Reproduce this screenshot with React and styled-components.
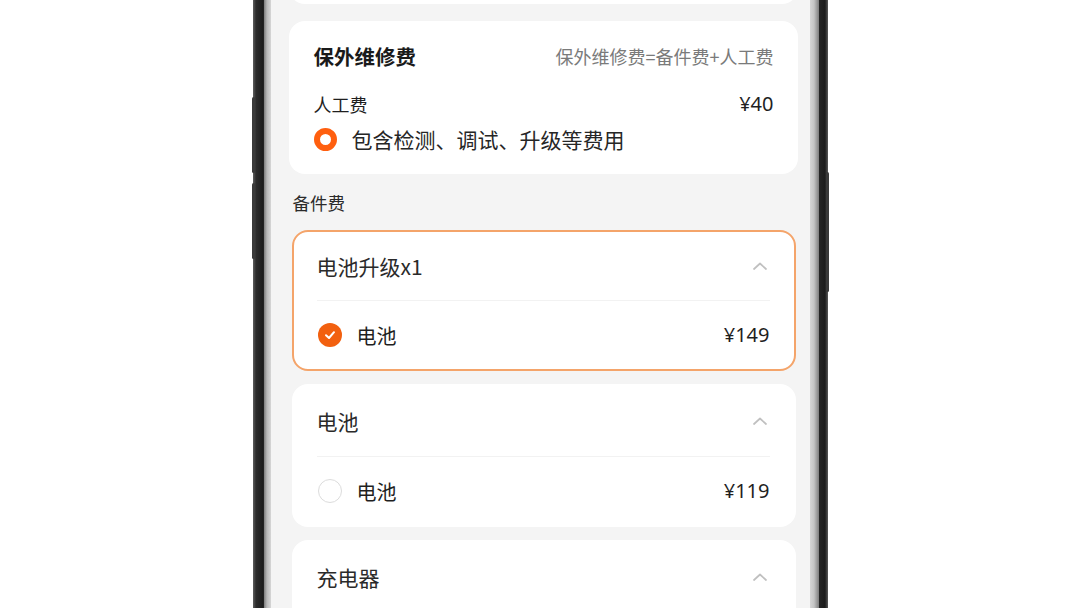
import React from "react";
import styled, { createGlobalStyle } from "styled-components";

const Global = createGlobalStyle`
  html, body { margin: 0; padding: 0; background: #ffffff; }
  body {
    width: 1080px; height: 608px; overflow: hidden;
    font-family: "Noto Sans CJK SC", "Noto Sans", sans-serif;
    color: #1f1f1f;
    -webkit-font-smoothing: antialiased;
  }
`;

const Phone = styled.div`
  position: relative;
  width: 575px;
  height: 820px;
  margin: -140px auto 0;
  padding: 0 18px;
  box-sizing: border-box;
  display: flex;
  border-radius: 60px;
  background: linear-gradient(
    90deg,
    #5e5e5e 0px, #2c2c2c 3px, #1c1c1c 10px, #2a2a2a 11px,
    #7c7c7c 11px, #b9b9b9 14px, #d6d6d6 18px,
    #d6d6d6 calc(100% - 18px), #c4c4c4 calc(100% - 14px), #7e7e7e calc(100% - 9px),
    #262626 calc(100% - 9px), #1c1c1c calc(100% - 3px), #5a5a5a 100%
  );
`;

const SideKey = styled.div`
  position: absolute;
  width: 3px;
  top: ${(p) => p.$top}px;
  height: ${(p) => p.$h}px;
  ${(p) => (p.$side === "left" ? "left: -1px;" : "right: -1px;")}
  background: #3a3a3a;
  border-radius: 2px;
`;

const Screen = styled.div`
  flex: 1;
  background: #f4f4f4;
  padding: 0 12px 0 18px;
  display: flex;
  flex-direction: column;
`;

const StubCard = styled.div`
  height: 144px;
  background: #ffffff;
  border-radius: 0 0 16px 16px;
  flex-shrink: 0;
`;

const FeeCard = styled.section`
  margin-top: 17px;
  background: #ffffff;
  border-radius: 16px;
  padding: 22px 24px 22px 25px;
  display: flex;
  flex-direction: column;
`;

const Row = styled.div`
  display: flex;
  align-items: center;
  justify-content: space-between;
  margin-top: ${(p) => p.$mt || 0}px;
`;

const Title = styled.h2`
  margin: 0;
  font-size: 20.5px;
  line-height: 26px;
  font-weight: 700;
  color: #1a1a1a;
`;

const Formula = styled.span`
  font-size: 18px;
  line-height: 26px;
  color: #7a7a7a;
`;

const Label = styled.span`
  font-size: 18px;
  line-height: 24px;
  color: #1f1f1f;
`;

const Price = styled.span`
  font-size: 20px;
  line-height: 24px;
  color: #1f1f1f;
  font-family: "Noto Sans", "Noto Sans CJK SC", sans-serif;
`;

const RadioLine = styled.div`
  display: flex;
  align-items: center;
  gap: 15px;
  margin-top: 10px;
  font-size: 21px;
  line-height: 26px;
  color: #262626;
`;

const Radio = styled.span`
  width: 23px;
  height: 23px;
  box-sizing: border-box;
  border-radius: 50%;
  border: 6.5px solid #ff5f0f;
  background: #fff;
  flex-shrink: 0;
`;

const SectionLabel = styled.div`
  margin: 18px 0 16px 4px;
  font-size: 17.5px;
  line-height: 22px;
  color: #2a2a2a;
`;

const PartCard = styled.section`
  margin: 0 2px 13px 3px;
  background: #ffffff;
  border-radius: 16px;
  border: 2px solid ${(p) => (p.$active ? "#f4a46a" : "transparent")};
  padding: 0 24px 0 23px;
  flex-shrink: 0;
  ${(p) => (p.$open ? "" : "flex: 1; margin-bottom: 0; border-radius: 16px 16px 0 0;")}
`;

const PartHeader = styled.div`
  height: ${(p) => (p.$active ? 68 : 70)}px;
  display: flex;
  align-items: center;
  justify-content: space-between;
  border-bottom: 1px solid #f2f2f2;
`;

const PartTitle = styled.span`
  font-size: 21px;
  color: #2a2a2a;
`;

const Chevron = styled.svg`
  width: 16px;
  height: 10px;
  margin-right: 2px;
`;

const PartRow = styled.div`
  height: 68px;
  display: flex;
  align-items: center;
`;

const Check = styled.span`
  width: 24px;
  height: 24px;
  border-radius: 50%;
  box-sizing: border-box;
  flex-shrink: 0;
  margin-left: 1px;
  display: flex;
  align-items: center;
  justify-content: center;
  background: ${(p) => (p.$on ? "#f2600f" : "#ffffff")};
  border: ${(p) => (p.$on ? "none" : "1px solid #dcdcdc")};
`;

const PartName = styled.span`
  margin-left: 15px;
  flex: 1;
  font-size: 20px;
  color: #1f1f1f;
`;

const UpIcon = () => (
  <Chevron viewBox="0 0 16 10">
    <path d="M2 8 L8 2.5 L14 8" fill="none" stroke="#c0c0c0" strokeWidth="1.7" strokeLinecap="round" strokeLinejoin="round" />
  </Chevron>
);

const parts = [
  { title: "电池升级x1", items: [{ name: "电池", price: "¥149", on: true }], active: true },
  { title: "电池", items: [{ name: "电池", price: "¥119", on: false }] },
  { title: "充电器", items: [] },
];

export default function App() {
  return (
    <>
      <Global />
      <Phone>
        <SideKey $side="left" $top={237} $h={76} />
        <SideKey $side="left" $top={323} $h={76} />
        <SideKey $side="right" $top={312} $h={120} />
        <Screen>
          <StubCard />
          <FeeCard>
            <Row>
              <Title>保外维修费</Title>
              <Formula>保外维修费=备件费+人工费</Formula>
            </Row>
            <Row $mt={23}>
              <Label>人工费</Label>
              <Price>¥40</Price>
            </Row>
            <RadioLine>
              <Radio />
              <span>包含检测、调试、升级等费用</span>
            </RadioLine>
          </FeeCard>
          <SectionLabel>备件费</SectionLabel>
          {parts.map((p, i) => (
            <PartCard key={i} $active={p.active} $open={p.items.length > 0}>
              <PartHeader $active={p.active}>
                <PartTitle>{p.title}</PartTitle>
                <UpIcon />
              </PartHeader>
              {p.items.map((it, j) => (
                <PartRow key={j}>
                  <Check $on={it.on}>
                    {it.on && (
                      <svg width="14" height="14" viewBox="0 0 14 14">
                        <path d="M3 7.2 L6 10 L11 4.2" fill="none" stroke="#fff" strokeWidth="2" strokeLinecap="round" strokeLinejoin="round" />
                      </svg>
                    )}
                  </Check>
                  <PartName>{it.name}</PartName>
                  <Price>{it.price}</Price>
                </PartRow>
              ))}
            </PartCard>
          ))}
        </Screen>
      </Phone>
    </>
  );
}
